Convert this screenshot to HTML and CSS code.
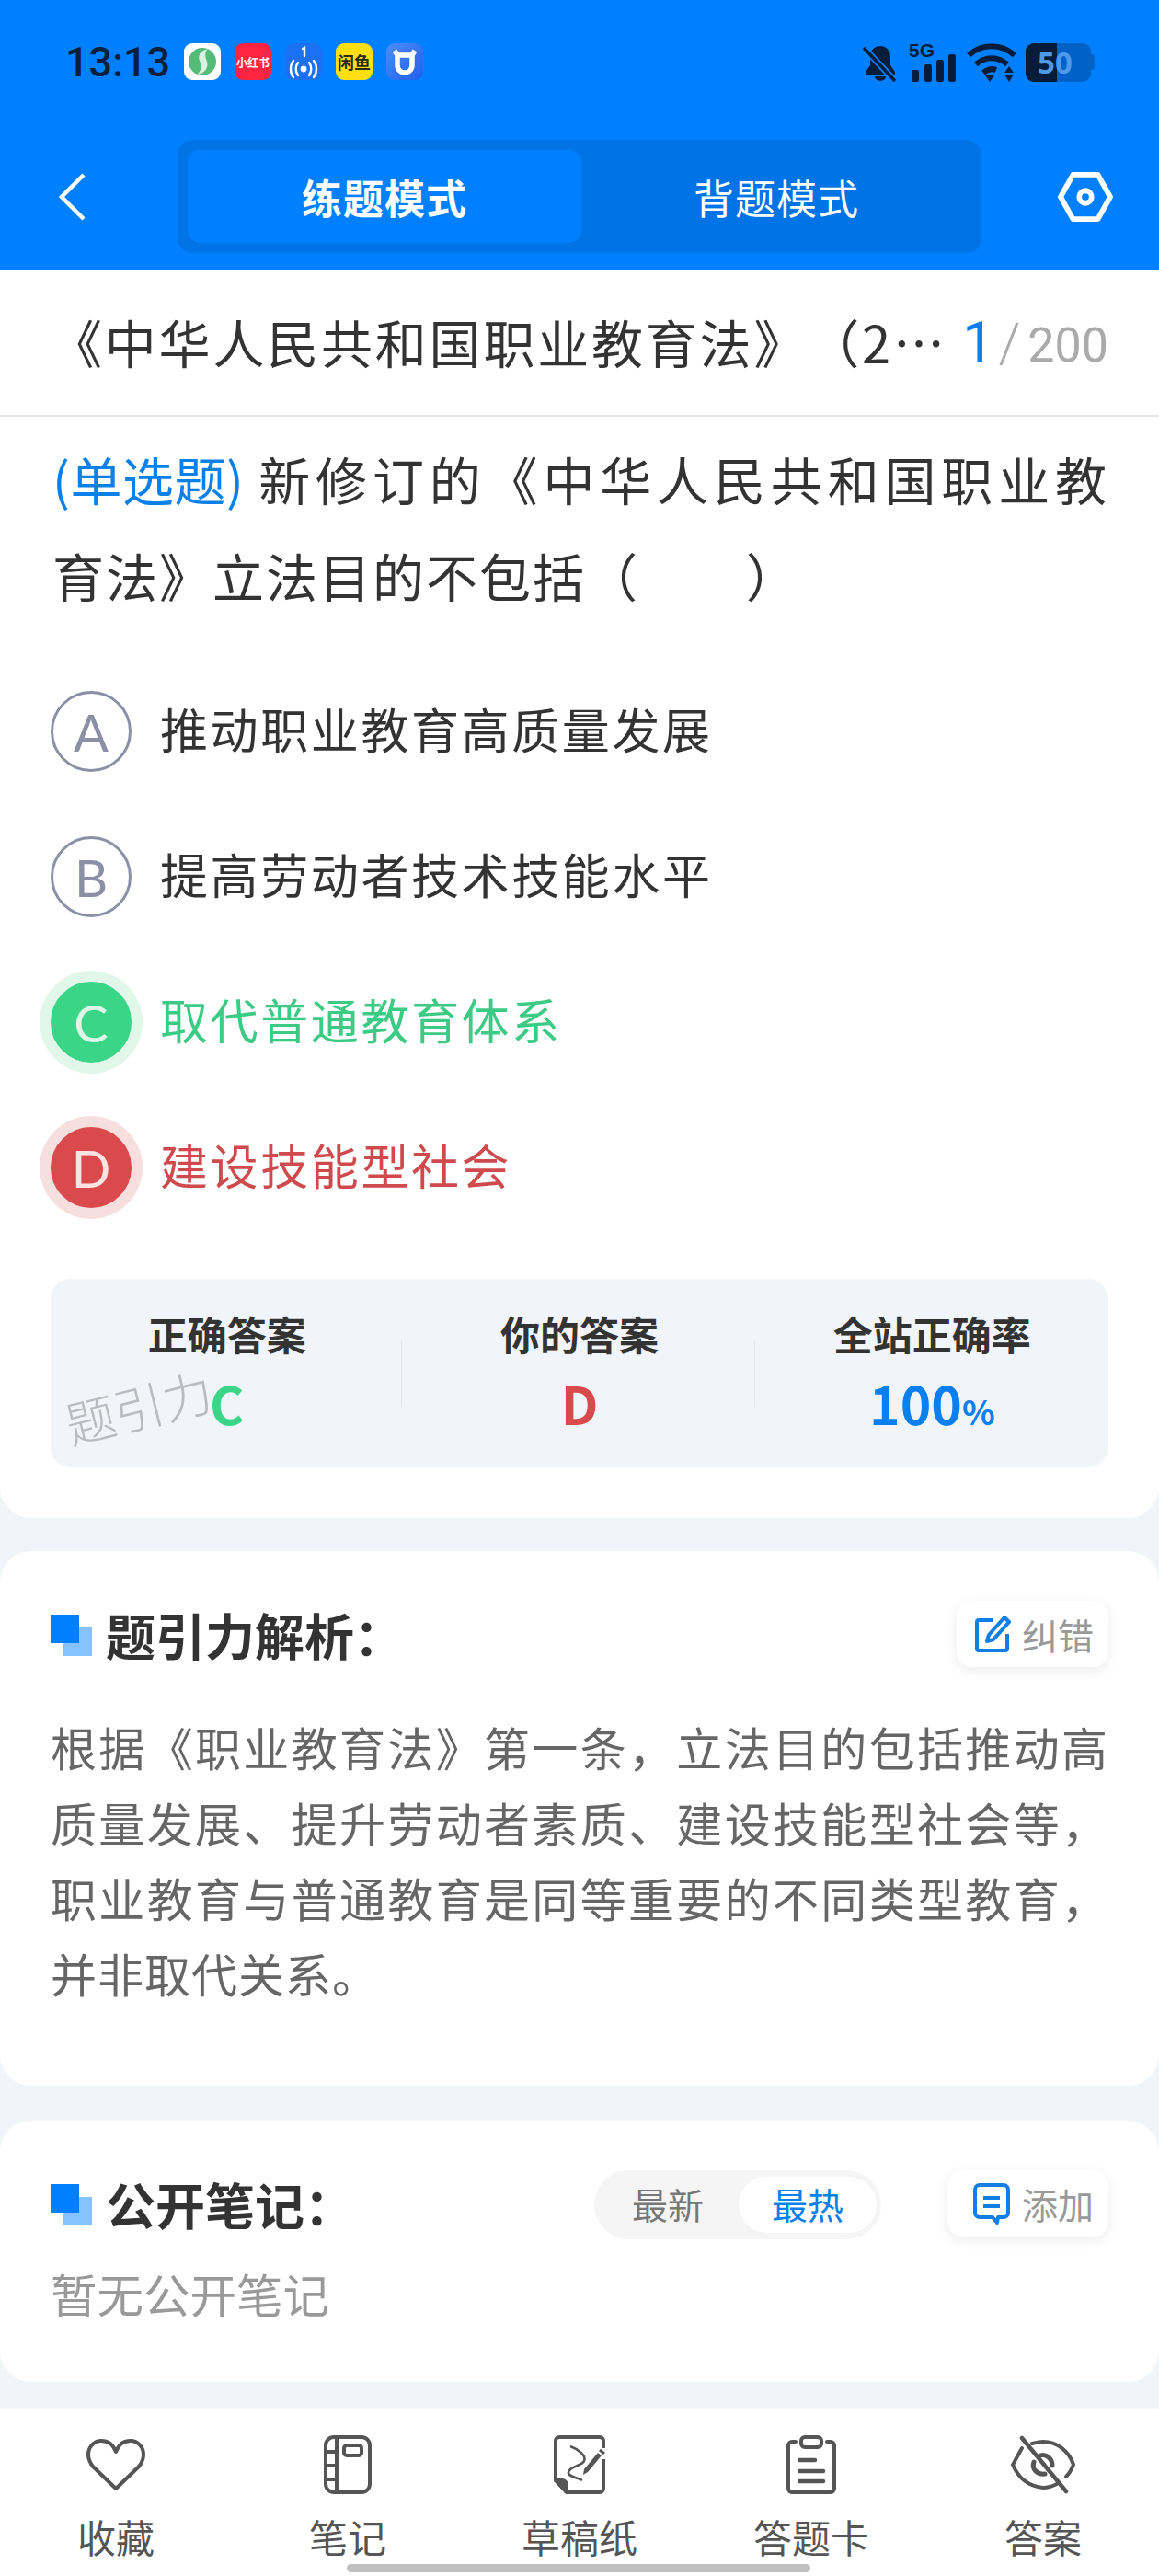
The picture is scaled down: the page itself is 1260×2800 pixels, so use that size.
FILE: index.html
```html
<!DOCTYPE html>
<html lang="zh-CN">
<head>
<meta charset="utf-8">
<title>练题模式</title>
<link rel="stylesheet" href="styles.css">
</head>
<body>
<div class="page">
  <header class="top">
    <div class="status">
      <span class="time">13:13</span>
      <div class="apps">
        <span class="app app-green"><svg viewBox="0 0 40 40" width="40" height="40"><circle cx="20" cy="20" r="15" fill="#55bb78"/><path d="M26 6c-9 2-11 8-9 13 2 5 3 10-3 15 9-1 13-8 11-14-2-5-3-10 1-14z" fill="#d8f3df"/></svg></span>
        <span class="app app-red">小红书</span>
        <span class="app app-blue"><svg viewBox="0 0 40 40" width="40" height="40" fill="none" stroke="#fff" stroke-width="2.4" stroke-linecap="round"><path d="M19 6l2-1v9"/><circle cx="20" cy="28" r="3.4" fill="#fff" stroke="none"/><path d="M14 21c-3 4-3 10 0 14M26 21c3 4 3 10 0 14M9 19c-4 5-4 13 0 18M31 19c4 5 4 13 0 18"/></svg></span>
        <span class="app app-yellow">闲鱼</span>
        <span class="app app-cow"><svg viewBox="0 0 40 40" width="40" height="40" fill="none"><path d="M9 8l3 5h16l3-5M12 13v11a8 8 0 0 0 16 0V13z" stroke="#fff" stroke-width="5.5" stroke-linejoin="round"/></svg></span>
      </div>
      <div class="sys">
        <svg class="bell" viewBox="0 0 40 42" width="40" height="42"><path d="M20 3c-7 0-11 5-11 12v9l-5 7v3h32v-3l-5-7v-9C31 8 27 3 20 3zM14 36a6 5 0 0 0 12 0z" fill="#061c3a"/><path d="M2 5l34 36" stroke="#0080ff" stroke-width="7"/><path d="M2 5l34 36" stroke="#061c3a" stroke-width="3.5"/></svg>
        <span class="signal"><span class="fiveg">5G</span><svg viewBox="0 0 48 30" width="48" height="30" fill="#061c3a"><rect y="17" width="8" height="13" rx="2"/><rect x="14" y="11" width="8" height="19" rx="2"/><rect x="27" y="6" width="8" height="24" rx="2"/><rect x="40" width="8" height="30" rx="2"/></svg></span>
        <svg class="wifi" viewBox="0 0 54 42" width="54" height="42" fill="none" stroke="#061c3a" stroke-width="6"><path d="M2 13c15-13 35-13 50 0M10 23c10-9 24-9 34 0M18 32c5-4 9-5 14-3"/><path d="M20 35h10l-5 7z" fill="#061c3a" stroke="none"/><path d="M46 25l5 7H41zM46 42l5-8H41z" fill="#061c3a" stroke="none"/></svg>
        <span class="battery"><span class="batt-fill"></span><span class="batt-num">50</span></span>
      </div>
    </div>
    <nav class="nav">
      <svg class="back" viewBox="0 0 30 52" width="30" height="52" fill="none" stroke="#fff" stroke-width="4.5"><path d="M27 2L3 26l24 24"/></svg>
      <div class="seg">
        <span class="seg-item seg-active">练题模式</span>
        <span class="seg-item">背题模式</span>
      </div>
      <svg class="hex" viewBox="0 0 62 56" width="60" height="54" fill="none" stroke="#fff" stroke-width="6" stroke-linejoin="round"><path d="M17 3h28l14 25-14 25H17L3 28z"/><circle cx="31" cy="28" r="7"/></svg>
    </nav>
  </header>

  <section class="card card-q">
    <div class="title-row">
      <div class="title">《中华人民共和国职业教育法》（2…</div>
      <div class="count"><span class="count-cur">1</span><span class="count-slash">/</span><span class="count-total">200</span></div>
    </div>
    <p class="question"><span class="q-line"><span class="qtype">(单选题)</span>新修订的《中华人民共和国职业教</span>育法》立法目的不包括（　　）</p>
    <ul class="options">
      <li class="opt"><span class="mark">A</span><span class="opt-text">推动职业教育高质量发展</span></li>
      <li class="opt"><span class="mark">B</span><span class="opt-text">提高劳动者技术技能水平</span></li>
      <li class="opt opt-right"><span class="mark">C</span><span class="opt-text">取代普通教育体系</span></li>
      <li class="opt opt-wrong"><span class="mark">D</span><span class="opt-text">建设技能型社会</span></li>
    </ul>
    <div class="stats">
      <div class="stat"><div class="stat-label">正确答案</div><div class="stat-val val-green">C</div></div>
      <div class="stat"><div class="stat-label">你的答案</div><div class="stat-val val-red">D</div></div>
      <div class="stat"><div class="stat-label">全站正确率</div><div class="stat-val val-blue">100<small>%</small></div></div>
      <span class="watermark">题引力</span>
    </div>
  </section>

  <section class="card card-a">
    <div class="card-head">
      <h2 class="heading"><span class="squares"></span>题引力解析：</h2>
      <span class="chip chip-fix">
        <svg viewBox="0 0 40 40" width="40" height="40" fill="none" stroke="#0f7fe6" stroke-width="4"><path d="M20 5H5a2 2 0 0 0-2 2v29a2 2 0 0 0 2 2h29a2 2 0 0 0 2-2V20"/><path d="M33 2l5 5-17 19-7 2 2-7z" stroke-linejoin="round"/></svg>
        纠错
      </span>
    </div>
    <p class="analysis">根据《职业教育法》第一条，立法目的包括推动高质量发展、提升劳动者素质、建设技能型社会等，职业教育与普通教育是同等重要的不同类型教育，并非取代关系。</p>
  </section>

  <section class="card card-n">
    <div class="card-head">
      <h2 class="heading"><span class="squares"></span>公开笔记：</h2>
      <div class="head-right">
        <div class="toggle"><span class="tog">最新</span><span class="tog tog-on">最热</span></div>
        <span class="chip chip-add">
          <svg viewBox="0 0 42 46" width="42" height="46" fill="none" stroke="#0f7fe6" stroke-width="4"><path d="M8 3h26a5 5 0 0 1 5 5v25a5 5 0 0 1-5 5h-6l-1 6-5-6H8a5 5 0 0 1-5-5V8a5 5 0 0 1 5-5z" stroke-linejoin="round"/><path d="M12 17h18M12 26h18"/></svg>
          添加
        </span>
      </div>
    </div>
    <p class="empty">暂无公开笔记</p>
  </section>

  <footer class="tabs">
    <div class="tab">
      <span class="tab-ic"><svg viewBox="0 0 64 56" width="64" height="56" fill="none" stroke="#555" stroke-width="4" stroke-linejoin="round"><path d="M32 14C29 6 23 2 16 2 8 2 2 9 2 17c0 5 2 9 5 13l25 24 25-24c3-4 5-8 5-13 0-8-6-15-14-15-7 0-13 4-16 12z"/></svg></span>
      <span class="tab-label">收藏</span>
    </div>
    <div class="tab">
      <span class="tab-ic"><svg viewBox="0 0 52 64" width="52" height="64" fill="none" stroke="#555" stroke-width="4"><rect x="2" y="2" width="48" height="60" rx="9"/><path d="M14 2v60M2 18h12M2 33h12M2 48h12"/><rect x="22" y="11" width="19" height="11" rx="3"/></svg></span>
      <span class="tab-label">笔记</span>
    </div>
    <div class="tab">
      <span class="tab-ic"><svg viewBox="0 0 56 64" width="56" height="64" fill="none" stroke="#555" stroke-width="4" stroke-linejoin="round"><path d="M54 14V6a4 4 0 0 0-4-4H6a4 4 0 0 0-4 4v43l12 13h36a4 4 0 0 0 4-4V26"/><path d="M2 49h7a5 5 0 0 1 5 5v8z" fill="#555"/><path d="M18 12c8 3 18 10 15 16-2 5-16 6-17 12-1 5 10 6 15 9" stroke-width="2.6"/><path d="M52 22L37 40l-5 3 1-6 15-18z" fill="#555" stroke="none"/><path d="M50 16l5 4" stroke-width="3"/></svg></span>
      <span class="tab-label">草稿纸</span>
    </div>
    <div class="tab">
      <span class="tab-ic"><svg viewBox="0 0 54 64" width="54" height="64" fill="none" stroke="#555" stroke-linecap="round" stroke-width="4"><path d="M10 7H6a4 4 0 0 0-4 4v47a4 4 0 0 0 4 4h42a4 4 0 0 0 4-4V11a4 4 0 0 0-4-4h-4"/><rect x="16" y="2" width="22" height="11" rx="4"/><path d="M14 27h17M14 39h26M14 50h26" stroke-width="4.5"/></svg></span>
      <span class="tab-label">答题卡</span>
    </div>
    <div class="tab">
      <span class="tab-ic"><svg viewBox="0 0 72 64" width="72" height="64" fill="none" stroke="#555" stroke-linecap="round" stroke-width="4"><path d="M13 3l48 58" stroke-width="4.5"/><path d="M13 14L3 32c5 12 14 23 33 25 6 0 11-2 15-4M24 9c4-1 8-2 12-2 15 0 28 10 33 25-2 5-4 9-8 13"/><path d="M26 29c-3 8 4 14 12 13M33 22c6-2 13 3 13 11" stroke-width="5"/></svg></span>
      <span class="tab-label">答案</span>
    </div>
  </footer>
  <div class="home-bar"></div>
</div>
</body>
</html>
```
FILE: styles.css
```css
* { box-sizing: border-box; }
html, body { margin: 0; padding: 0; }
body { font-family: "Noto Sans CJK SC", "Noto Sans", sans-serif; color: #333; text-spacing-trim: space-all; }
h2, p, ul { margin: 0; padding: 0; }
ul { list-style: none; }

.page {
  position: relative;
  width: 1260px;
  height: 2800px;
  overflow: hidden;
  background: #f1f5f9;
  display: flex;
  flex-direction: column;
}

/* header */
.top { height: 294px; background: #0080ff; flex: none; }
.status {
  height: 152px;
  padding: 47px 74px 0 71px;
  display: flex;
  align-items: flex-start;
}
.time {
  font-family: Roboto, sans-serif;
  font-size: 45px;
  font-weight: 500;
  line-height: 42px;
  width: 129px;
  color: #0b1f3c;
  flex: none;
}
.apps { display: flex; gap: 15px; }
.app {
  width: 40px;
  height: 40px;
  border-radius: 9px;
  overflow: hidden;
  display: flex;
  align-items: center;
  justify-content: center;
  font-weight: 700;
}
.app svg { display: block; }
.app-green { background: #fff; }
.app-red { background: #ff2442; color: #fff; font-size: 12px; }
.app-blue { background: #1c70f2; }
.app-yellow { background: #ffdf12; color: #2d2a10; font-size: 18px; }
.app-cow { background: linear-gradient(135deg, #4d8cf5, #1f60ec); }
.sys { margin-left: auto; display: flex; align-items: flex-start; }
.bell { flex: none; }
.signal { position: relative; width: 51px; height: 42px; margin-left: 11px; flex: none; }
.signal svg { position: absolute; left: 3px; bottom: 0; }
.fiveg {
  position: absolute;
  left: 0;
  top: -3px;
  font-family: "Liberation Sans", sans-serif;
  font-size: 21px;
  line-height: 22px;
  font-weight: 700;
  color: #061c3a;
}
.wifi { margin-left: 12px; flex: none; }
.battery {
  position: relative;
  width: 71px;
  height: 42px;
  margin-left: 10px;
  border-radius: 9px;
  background: #0061c6;
  flex: none;
}
.battery::after {
  content: "";
  position: absolute;
  right: -4px;
  top: 12px;
  width: 4px;
  height: 17px;
  border-radius: 0 3px 3px 0;
  background: #0061c6;
}
.batt-fill {
  display: block;
  width: 34px;
  height: 42px;
  background: #061c3a;
  border-radius: 9px 0 0 9px;
}
.batt-num {
  position: absolute;
  left: 13px;
  top: 0;
  font-family: "Noto Sans", sans-serif;
  font-size: 33px;
  line-height: 42px;
  font-weight: 700;
  color: #4d9be8;
}

.nav {
  height: 123px;
  padding: 0 50px 0 64px;
  display: flex;
  align-items: center;
}
.back { flex: none; }
.seg {
  width: 874px;
  height: 123px;
  margin-left: 99px;
  padding: 11px;
  border-radius: 16px;
  background: #0073e6;
  display: grid;
  grid-template-columns: 428px 1fr;
}
.seg-item {
  display: flex;
  align-items: center;
  justify-content: center;
  font-size: 44px;
  letter-spacing: 1px;
  color: #fff;
  border-radius: 14px;
}
.seg-active { background: #0080ff; font-weight: 700; }
.hex { margin-left: auto; flex: none; }

/* cards */
.card { background: #fff; flex: none; border-radius: 0 0 34px 34px; }
.card-q { height: 1356px; }
.card-a { height: 581px; margin-top: 36px; border-radius: 34px; padding: 54px 55px 0 57px; }
.card-n { height: 284px; margin-top: 38px; border-radius: 34px; padding: 54px 55px 0 57px; }

.title-row {
  height: 159px;
  border-bottom: 2px solid #e4e4e4;
  padding: 0 55px 0 57px;
  display: flex;
  align-items: center;
  justify-content: space-between;
}
.title {
  margin-left: -2px;
  padding-bottom: 3px;
  font-size: 56px;
  letter-spacing: 2.8px;
  line-height: 72px;
  white-space: nowrap;
  color: #333;
}
.count { display: flex; align-items: baseline; padding-top: 2px; font-family: Roboto, sans-serif; line-height: 72px; }
.count-cur { font-size: 61px; color: #0a80f0; }
.count-slash { font-size: 60px; color: #aaa; margin: 0 8px 0 5px; font-weight: 300; }
.count-total { font-size: 52px; color: #aaa; }

.question {
  margin: 14px 55px 0 57px;
  font-size: 56px;
  line-height: 105px;
  letter-spacing: 2px;
  color: #333;
}
.q-line { display: block; text-align-last: justify; }
.qtype { display: inline-block; color: #0a80ea; letter-spacing: 0.5px; margin-right: 12px; }

.options { margin-top: 39px; padding-left: 55px; }
.opt {
  height: 158px;
  display: flex;
  align-items: center;
  gap: 31px;
}
.mark {
  width: 88px;
  height: 88px;
  border-radius: 50%;
  border: 3px solid #8b90a6;
  color: #8b90a6;
  display: flex;
  align-items: center;
  justify-content: center;
  font-family: Lato, sans-serif;
  font-size: 56px;
  flex: none;
}
.opt-text { padding-bottom: 8px; font-size: 52px; letter-spacing: 2.6px; color: #333; }
.opt-right .mark { background: #3bd588; border-color: #3bd588; color: #ddf8e8; box-shadow: 0 0 0 12px #e1f7ea; }
.opt-right .opt-text { color: #3cca84; }
.opt-wrong .mark { background: #da4a4c; border-color: #da4a4c; color: #fbe3e3; box-shadow: 0 0 0 12px #f8dfdf; }
.opt-wrong .opt-text { color: #cf4a4c; }

.stats {
  position: relative;
  width: 1150px;
  height: 205px;
  margin: 42px 0 0 55px;
  padding-top: 34px;
  border-radius: 22px;
  background: #f1f5f9;
  display: grid;
  grid-template-columns: repeat(3, 1fr);
}
.stat { position: relative; text-align: center; }
.stat + .stat::before {
  content: "";
  position: absolute;
  left: -2px;
  top: 32px;
  width: 1px;
  height: 73px;
  background: #e3e7ec;
}
.stat-label { font-size: 43px; line-height: 50px; font-weight: 700; color: #333; }
.stat-val { margin-top: 20px; font-size: 57px; line-height: 60px; font-weight: 700; }
.stat-val small { font-size: 37px; font-weight: 700; }
.val-green { color: #3bd588; }
.val-red { color: #d84b4d; }
.val-blue { color: #0a80f0; }
.watermark {
  position: absolute;
  left: 17px;
  top: 128px;
  font-size: 54px;
  line-height: 60px;
  font-weight: 300;
  color: #b9bbbe;
  transform: rotate(-14deg);
  transform-origin: left center;
}

.card-head { display: flex; justify-content: space-between; align-items: flex-start; }
.heading {
  display: flex;
  align-items: center;
  gap: 29px;
  height: 72px;
  font-size: 54px;
  font-weight: 700;
  color: #333;
}
.squares {
  position: relative;
  width: 31px;
  height: 31px;
  margin-left: -2px;
  margin-bottom: 12px;
  background: #0080ff;
}
.squares::after {
  content: "";
  position: absolute;
  left: 14px;
  top: 14px;
  width: 31px;
  height: 31px;
  background: #85c2ff;
}
.squares::before {
  content: "";
  position: absolute;
  z-index: 1;
  inset: 0;
  background: #0080ff;
}
.chip {
  height: 72px;
  border-radius: 16px;
  background: #fff;
  box-shadow: 0 4px 14px rgba(0, 0, 0, 0.08);
  display: flex;
  align-items: center;
  justify-content: flex-end;
  padding-right: 16px;
  gap: 12px;
  font-size: 39px;
  color: #999;
}
.chip-fix { width: 165px; }
.chip-add { width: 175px; }
.head-right { display: flex; gap: 72px; align-items: flex-start; }
.toggle {
  width: 312px;
  height: 75px;
  padding: 7px 5px 7px 15px;
  border-radius: 38px;
  background: #f5f5f5;
  display: flex;
  justify-content: space-between;
}
.tog {
  width: 130px;
  padding-bottom: 3px;
  display: flex;
  align-items: center;
  justify-content: center;
  font-size: 39px;
  color: #777;
  border-radius: 31px;
}
.tog-on { width: 150px; background: #fff; color: #0a80ea; }
.analysis {
  margin: 45px 0 0 -2px;
  font-size: 50px;
  line-height: 82px;
  letter-spacing: 1px;
  text-align: justify;
  color: #666;
}
.empty { margin: 18px 0 0 -2px; font-size: 50.5px; line-height: 80px; color: #999; }

/* bottom */
.tabs {
  margin-top: auto;
  height: 182px;
  background: #fff;
  display: grid;
  grid-template-columns: repeat(5, 1fr);
  flex: none;
}
.tab { display: flex; flex-direction: column; align-items: center; padding-top: 29px; }
.tab-ic { height: 64px; display: flex; align-items: center; justify-content: center; }
.tab-ic svg { display: block; }
.tab-label { margin-top: 18px; font-size: 42px; line-height: 56px; color: #555; }
.home-bar {
  position: absolute;
  left: 377px;
  bottom: 4px;
  width: 504px;
  height: 9px;
  border-radius: 5px;
  background: #c0c0c0;
}
```
